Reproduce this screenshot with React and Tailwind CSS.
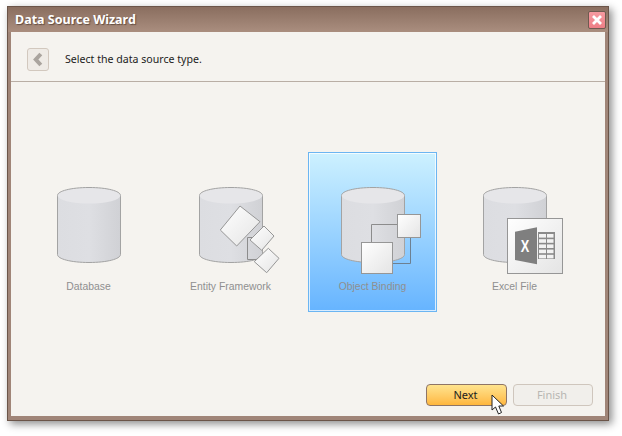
import React from 'react';

// Gray database drum shared by all four cards
function Cylinder() {
  return (
    <>
      <path d="M33.5 43.5 V102.5 C33.5 107 47 110.5 65 110.5 C83 110.5 96.5 107 96.5 102.5 V43.5 Z" fill="url(#drum)" stroke="#a3a3a3" strokeWidth="1" />
      <ellipse cx="65" cy="43.5" rx="31.5" ry="8" fill="#e6e6e9" stroke="none" />
      <path d="M33.5 43.5 C33.5 39 47 35.5 65 35.5 C83 35.5 96.5 39 96.5 43.5" fill="none" stroke="#a3a3a3" strokeWidth="1" />
    </>
  );
}

function Box({ x, y, size }) {
  return <rect x={x} y={y} width={size} height={size} fill="url(#box)" stroke="#969696" strokeWidth="1" />;
}

function DatabaseArt() {
  return <Cylinder />;
}

function EntityArt() {
  return (
    <>
      <Cylinder />
      <path d="M92 85.5 H81.5 V107.5 H97" fill="none" stroke="#8c8c8c" strokeWidth="1" />
      <polygon points="74,54 94,69.7 70.7,94 54.3,78" fill="url(#box)" stroke="#969696" />
      <polygon points="98,74 108,84 95.7,98.3 84,88" fill="url(#box)" stroke="#969696" />
      <polygon points="102.3,96.3 113,106.3 100.7,120.7 88.3,109.7" fill="url(#box)" stroke="#969696" />
    </>
  );
}

function BindingArt() {
  return (
    <>
      <Cylinder />
      <path d="M63.5 90 V72.5 H89" fill="none" stroke="#8c8c8c" strokeWidth="1" />
      <path d="M102.5 85.5 V111.5 H84.5" fill="none" stroke="#6d8091" strokeWidth="1" />
      <Box x={89.5} y={62.5} size={23} />
      <Box x={53.5} y={90.5} size={31} />
    </>
  );
}

function ExcelArt() {
  return (
    <>
      <Cylinder />
      <Box x={57.5} y={66.5} size={55} />
      <polygon points="65,79.7 87,75.3 87,112.3 65,108" fill="#7f7f7f" />
      <text x="75" y="100" textAnchor="middle" fontFamily="Liberation Sans Narrow, Liberation Sans, sans-serif" fontWeight="700" fontSize="16" fill="#ffffff" transform="translate(75 0) scale(0.8 1) translate(-75 0)">X</text>
      <rect x="88" y="80" width="17" height="27" fill="#8a8a8a" />
      {[82, 87.2, 92.4, 97.6, 102.8].map((y) => (
        <React.Fragment key={y}>
          <rect x="89" y={y} width="7" height="3.6" fill="#f2f2f2" />
          <rect x="97" y={y} width="6.5" height="3.6" fill="#f2f2f2" />
        </React.Fragment>
      ))}
    </>
  );
}

const sources = [
  { label: 'Database', Art: DatabaseArt },
  { label: 'Entity Framework', Art: EntityArt },
  { label: 'Object Binding', Art: BindingArt, selected: true },
  { label: 'Excel File', Art: ExcelArt },
];

function SourceCard({ label, Art, selected }) {
  return (
    <div
      className={`w-[129px] h-[160px] flex flex-col items-center border ${
        selected
          ? 'border-[#6bb5f2] bg-gradient-to-b from-[#cdf1ff] to-[#66b4ff] shadow-[inset_0_0_0_1px_rgba(255,255,255,0.75)]'
          : 'border-transparent'
      }`}
    >
      <svg width="129" height="124" viewBox="0 0 129 124" className="block shrink-0 self-start -ml-px -mr-px -mt-px">
        <defs>
          <linearGradient id="drum" x1="0" x2="1" y1="0" y2="0">
            <stop offset="0" stopColor="#dcdde1" />
            <stop offset="0.5" stopColor="#dedfe3" />
            <stop offset="1" stopColor="#d0d1d5" />
          </linearGradient>
          <linearGradient id="box" x1="0" x2="1" y1="0" y2="1">
            <stop offset="0" stopColor="#ffffff" />
            <stop offset="1" stopColor="#e4e4e4" />
          </linearGradient>
        </defs>
        <Art />
      </svg>
      <span className="mt-[4px] text-[10.4px] leading-[14px] text-[#8f8f8f] font-['Liberation_Sans',sans-serif]">{label}</span>
    </div>
  );
}

export default function App() {
  return (
    <div className="w-[622px] h-[436px] bg-white pl-[7px] pt-[6px] relative font-['Noto_Sans',sans-serif]">
      <div className="w-[602px] h-[415px] flex flex-col border border-[#6b5549] bg-[#a08578] shadow-[3px_3px_8px_rgba(0,0,0,0.45)]">
        {/* Title bar */}
        <div className="h-[25px] shrink-0 flex items-center justify-between pl-[7px] pr-[2px] bg-gradient-to-b from-[#8a6e5f] to-[#aa8e7f]">
          <span className="pt-[2px] text-[12.5px] font-bold text-white [text-shadow:1px_1px_1px_rgba(60,40,30,0.6)]">Data Source Wizard</span>
          <button className="w-[18px] h-[18px] flex items-center justify-center border border-[#6f5a50] rounded-[2px] bg-gradient-to-b from-[#f69aa0] to-[#ee7f86]">
            <svg width="12" height="12" viewBox="0 0 12 12">
              <path d="M2 2 L10 10 M10 2 L2 10" stroke="#ffffff" strokeWidth="2.8" />
            </svg>
          </button>
        </div>

        {/* Body */}
        <div className="flex-1 flex flex-col ml-[3px] mr-[3px] mb-[4px] bg-[#f5f3ef]">
          <div className="h-[50px] shrink-0 flex items-center gap-[16px] pl-[16px] pt-[5px] border-b border-[#b9aea5]">
            <button className="w-[22px] h-[23px] flex items-center justify-center rounded-[3px] border border-[#d2c8be] bg-[#efebe6]">
              <svg width="12" height="15" viewBox="0 0 12 15">
                <path d="M8.8 2 L3.8 7.5 L8.8 13" fill="none" stroke="#aaa49e" strokeWidth="4" />
              </svg>
            </button>
            <span className="pt-[2px] text-[10.6px] text-[#1c1c1c]">Select the data source type.</span>
          </div>

          <div className="flex gap-[13px] pl-[13px] pt-[70px]">
            {sources.map((s) => (
              <SourceCard key={s.label} {...s} />
            ))}
          </div>

          <div className="mt-auto flex justify-end gap-[6px] pr-[12px] pb-[10px]">
            <button className="w-[81px] h-[22px] rounded-[4px] border border-[#8f7566] bg-gradient-to-b from-[#ffe48e] to-[#ffb73c] pr-[2px] text-[11px] text-[#1c1c1c]">Next</button>
            <button className="w-[80px] h-[22px] rounded-[4px] border border-[#cfc6bd] bg-[#f1efeb] pr-[2px] text-[11px] text-[#b8b6b2]">Finish</button>
          </div>
        </div>
      </div>

      {/* Mouse pointer over the Next button */}
      <svg width="14" height="22" viewBox="0 0 14 22" className="absolute left-[491px] top-[394px]">
        <path d="M1 1 V16 L4.5 13 L7.5 20 L10.5 18.5 L7.8 12 L12.5 12 Z" fill="#ffffff" stroke="#222222" strokeWidth="1" />
      </svg>
    </div>
  );
}
